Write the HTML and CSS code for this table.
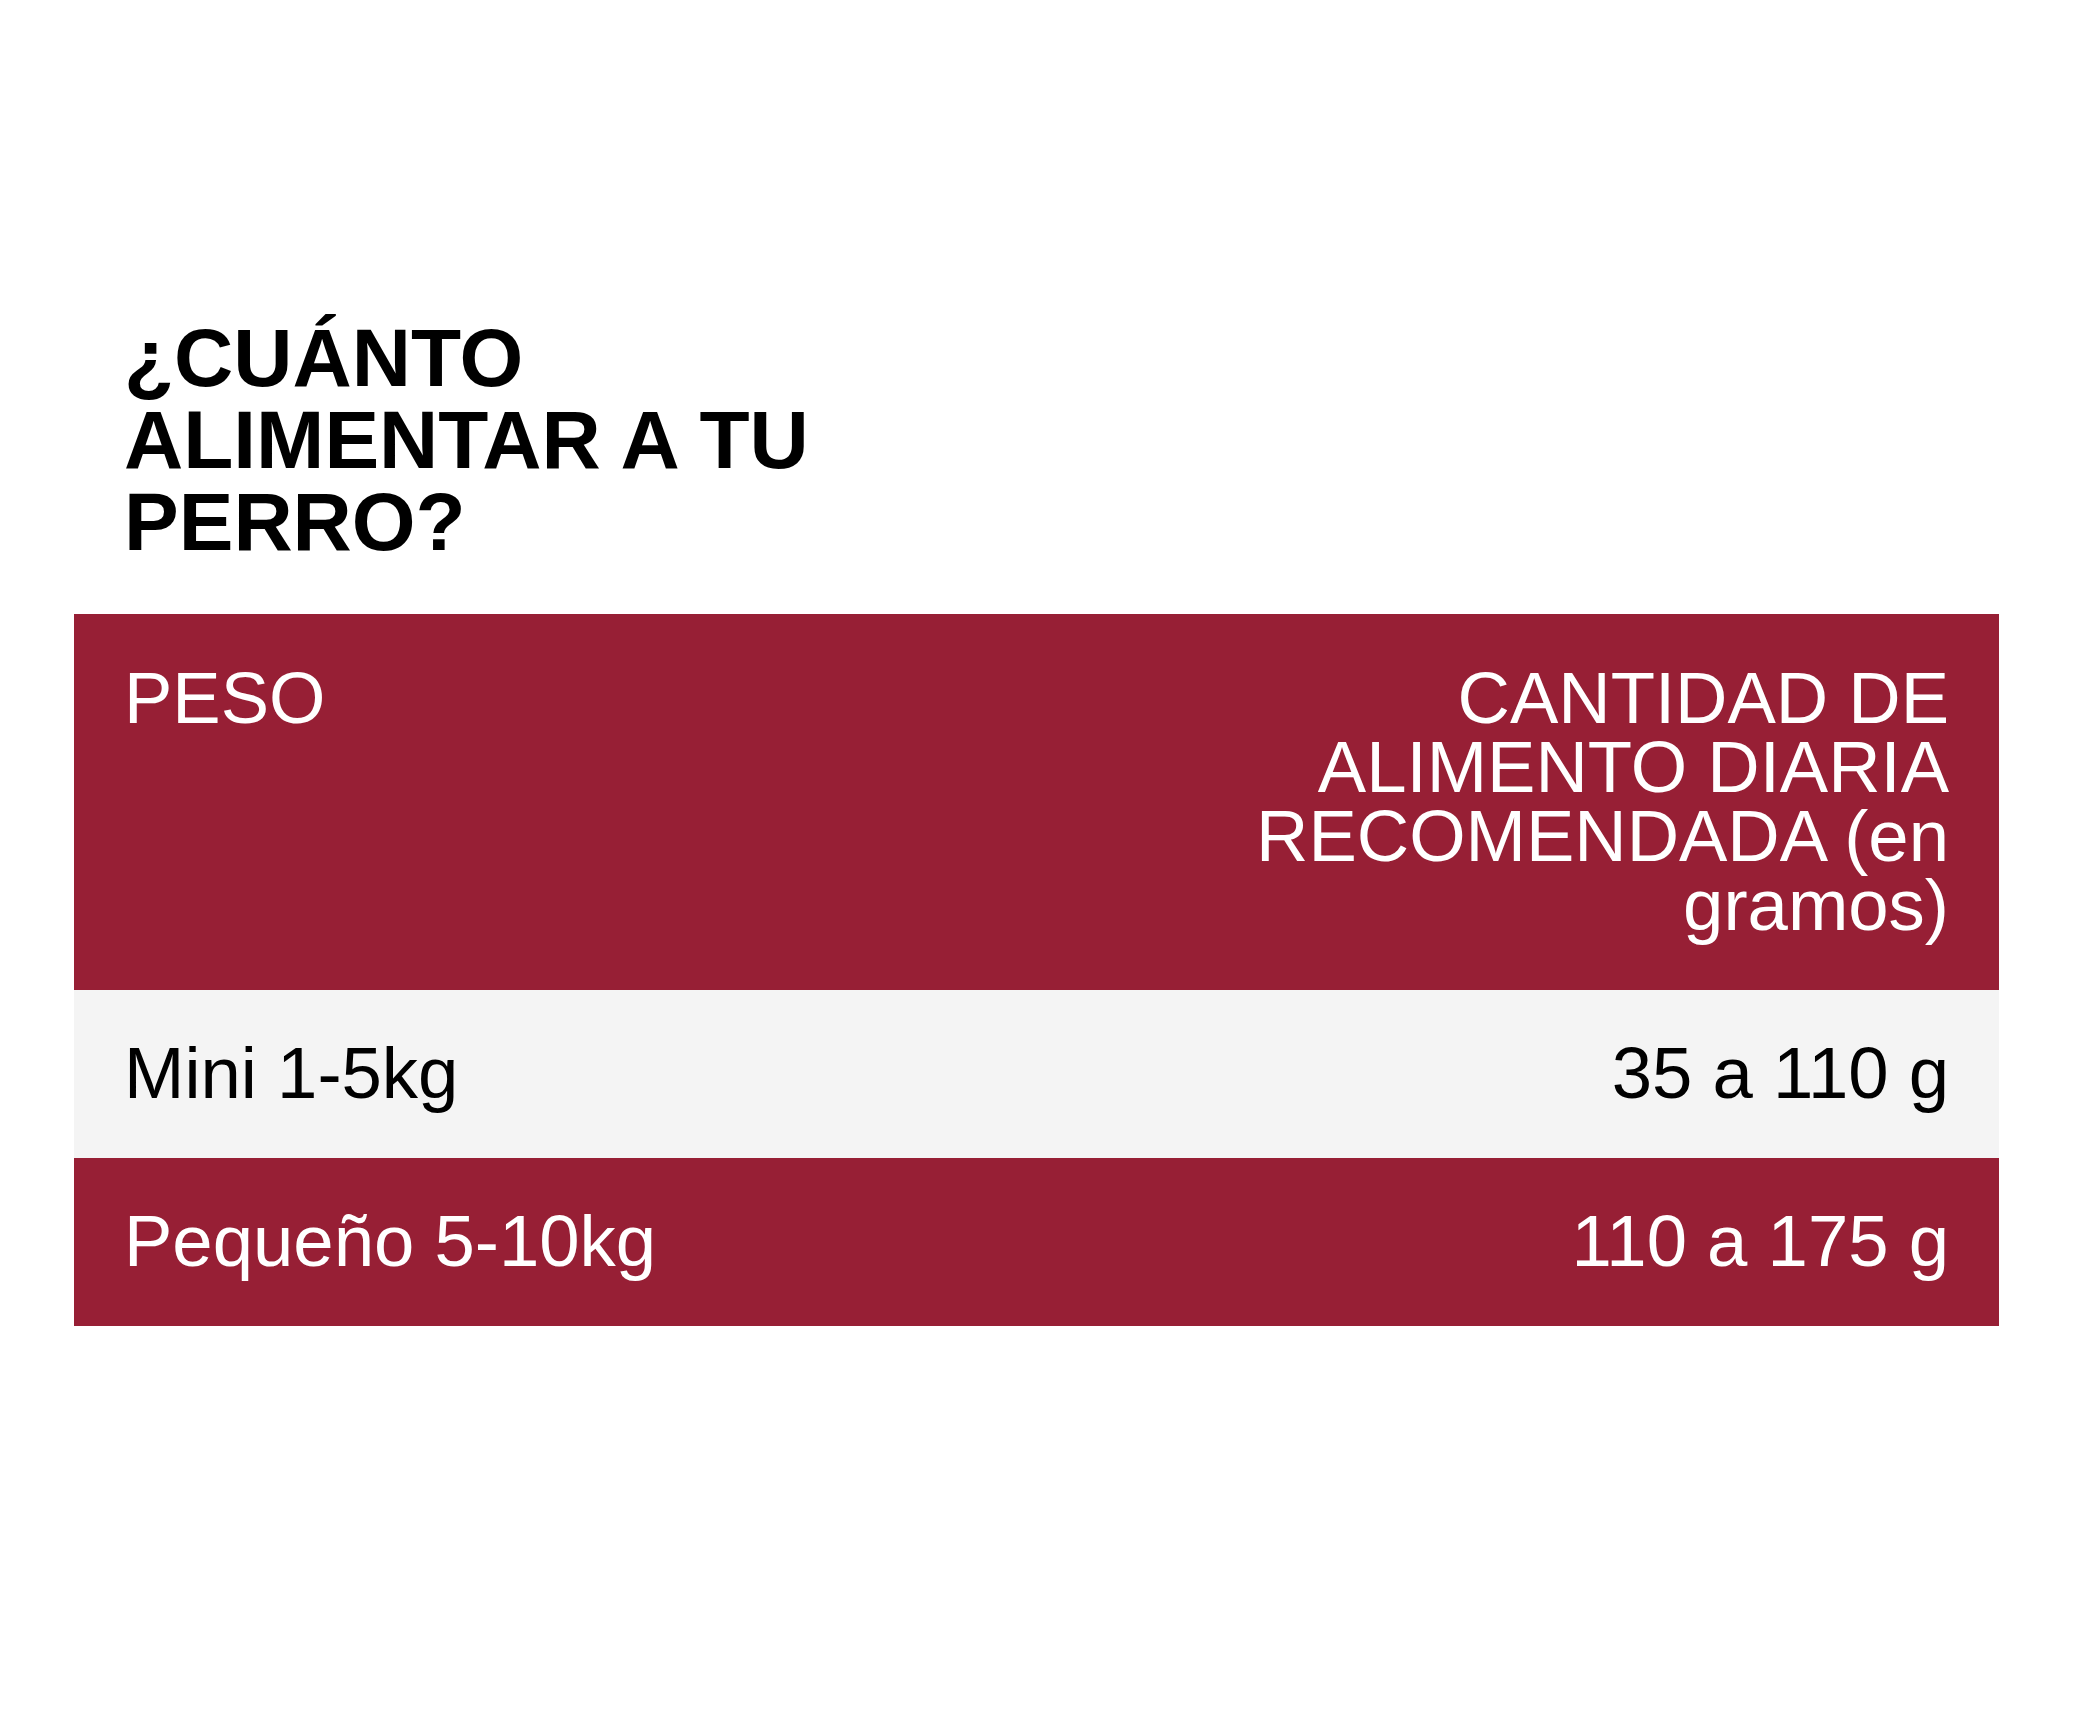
FILE: index.html
```html
<!DOCTYPE html>
<html lang="es">
<head>
<meta charset="utf-8">
<title>¿Cuánto alimentar a tu perro?</title>
<link rel="stylesheet" href="styles.css">
</head>
<body>
<main class="page">
  <section class="feeding">
    <h2 class="feeding-title">¿CUÁNTO ALIMENTAR A TU PERRO?</h2>
    <table class="feeding-table">
      <thead>
        <tr class="row-head">
          <th class="cell cell-left">PESO</th>
          <th class="cell cell-right">CANTIDAD DE ALIMENTO DIARIA RECOMENDADA (en gramos)</th>
        </tr>
      </thead>
      <tbody>
        <tr class="row-light">
          <td class="cell cell-left">Mini 1-5kg</td>
          <td class="cell cell-right">35 a 110 g</td>
        </tr>
        <tr class="row-dark">
          <td class="cell cell-left">Pequeño 5-10kg</td>
          <td class="cell cell-right">110 a 175 g</td>
        </tr>
      </tbody>
    </table>
  </section>
</main>
</body>
</html>
```

FILE: styles.css
```css
html, body {
  margin: 0;
  padding: 0;
  background: #ffffff;
}

body {
  font-family: "Liberation Sans", Arial, sans-serif;
  color: #000000;
}

.page {
  padding: 317px 0 0 74px;
}

.feeding {
  width: 1925px;
}

.feeding-title {
  margin: 0 0 51px 0;
  padding: 0 0 0 50px;
  width: 760px;
  font-size: 82px;
  line-height: 82px;
  font-weight: 700;
  color: #000000;
}

.feeding-table {
  width: 100%;
  border-collapse: collapse;
  border-spacing: 0;
  table-layout: fixed;
}

.cell {
  font-size: 72.5px;
  line-height: 69px;
  font-weight: 400;
  padding: 48px 50px 51px 50px;
  vertical-align: top;
}

.row-head .cell {
  padding-top: 49px;
  padding-bottom: 51px;
}

.cell-left {
  text-align: left;
  width: 975px;
}

.cell-right {
  text-align: right;
}

.row-head,
.row-dark {
  background: #971f35;
  color: #ffffff;
}

.row-light {
  background: #f4f4f4;
  color: #000000;
}
```
